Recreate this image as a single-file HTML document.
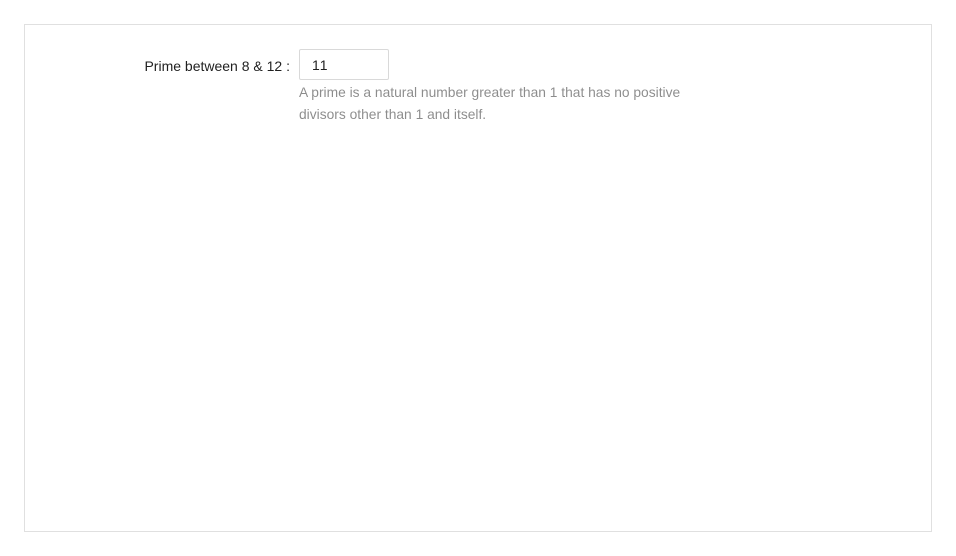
<!DOCTYPE html>
<html><head><style>
body{margin:0;background:#fff;font-family:"Liberation Sans",sans-serif;}
.panel{position:absolute;left:24px;top:24px;width:906px;height:506px;border:1px solid #e0e0e0;}
.label{position:absolute;right:666px;top:58px;font-size:14px;color:rgba(0,0,0,.88);white-space:nowrap;}
.input{position:absolute;left:299px;top:49px;width:90px;height:31px;border:1px solid #d9d9d9;border-radius:2px;box-sizing:border-box;font-size:14px;padding:0 12px;line-height:31px;letter-spacing:1px;color:rgba(0,0,0,.88);}
.help{position:absolute;left:299px;top:82px;font-size:13.8px;line-height:22px;color:rgba(0,0,0,.45);}
</style></head><body>
<div class="panel"></div>
<div class="label">Prime between 8 &amp; 12 :</div>
<div class="input">11</div>
<div class="help">A prime is a natural number greater than 1 that has no positive<br>divisors other than 1 and itself.</div>
</body></html>
